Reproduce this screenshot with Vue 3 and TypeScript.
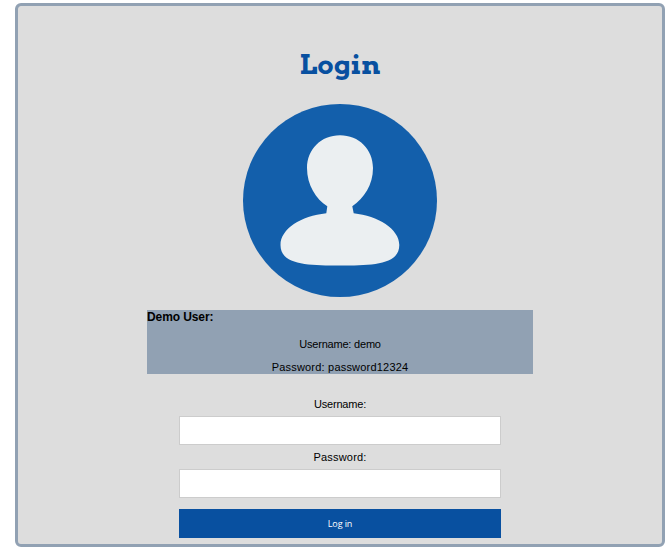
<script setup lang="ts">
import { ref } from 'vue'

const username = ref('')
const password = ref('')
</script>

<template>
  <main class="panel">
    <h1 class="title">Login</h1>
    <svg class="avatar" viewBox="0 0 194 193" aria-hidden="true">
      <ellipse cx="97" cy="96.5" rx="97" ry="96.5" fill="#135fab" />
      <path
        fill="#ebeff1"
        d="M97 31.300C78 31.300 64 45.500 64 64C64 81 73 95 84.300 102.300L83.300 109.300C58 112 37.500 125 37.500 141C37.500 161 65 161.500 97 161.500C129 161.500 156.300 161 156.300 141C156.300 125 135 112 110.700 109.300L109.300 102.300C121 94 130 81 130 64C130 45.500 116 31.300 97 31.300Z"
      />
    </svg>
    <section class="demo">
      <h2>Demo User:</h2>
      <p class="user">Username: demo</p>
      <p>Password: password12324</p>
    </section>
    <form class="form" @submit.prevent>
      <label class="user" for="username">Username:</label>
      <input id="username" v-model="username" type="text" />
      <label for="password">Password:</label>
      <input id="password" v-model="password" type="password" />
      <button type="submit">Log in</button>
    </form>
  </main>
</template>

<style>
body {
  background: #fff;
}
</style>

<style scoped>
.panel {
  box-sizing: border-box;
  display: flex;
  flex-direction: column;
  align-items: center;
  width: 650px;
  height: 544px;
  margin: 3px 0 0 15px;
  border: 3px solid #91a1b3;
  border-radius: 6px;
  background: #ddd;
  color: #000;
  font-family: "Liberation Sans", Arial, sans-serif;
  font-size: 11px;
}
.title {
  height: 36px;
  margin: 41px 0 0;
  color: #0850a0;
  font: bold 27px/36px Arvo, "DejaVu Serif", serif;
}
.avatar {
  display: block;
  flex: none;
  width: 194px;
  height: 193px;
  margin-top: 21px;
}
.demo {
  width: 386px;
  height: 64px;
  margin-top: 13px;
  background: #91a1b3;
  text-align: center;
}
.demo h2 {
  margin: 0;
  font-size: 12px;
  line-height: 14px;
  letter-spacing: -0.1px;
  text-align: left;
}
.demo p {
  margin: 10px 0 0;
  line-height: 13px;
  letter-spacing: 0.2px;
}
.demo .user {
  margin-top: 14px;
  letter-spacing: -0.2px;
}
.form {
  display: flex;
  flex-direction: column;
  width: 322px;
  margin-top: 24px;
  text-align: center;
}
label {
  height: 18px;
  line-height: 13px;
  letter-spacing: 0.2px;
}
label.user {
  letter-spacing: -0.2px;
}
input {
  box-sizing: border-box;
  width: 100%;
  height: 29px;
  margin: 0 0 6px;
  padding: 4px 8px;
  border: 1px solid #ccc;
  border-radius: 0;
  background: #fff;
  outline: none;
}
button {
  height: 29px;
  margin: 5px 0 0;
  padding: 0;
  border: 0;
  background: #0850a0;
  color: #fff;
  font: 9px/29px "Open Sans", sans-serif;
  letter-spacing: -0.1px;
}
</style>
